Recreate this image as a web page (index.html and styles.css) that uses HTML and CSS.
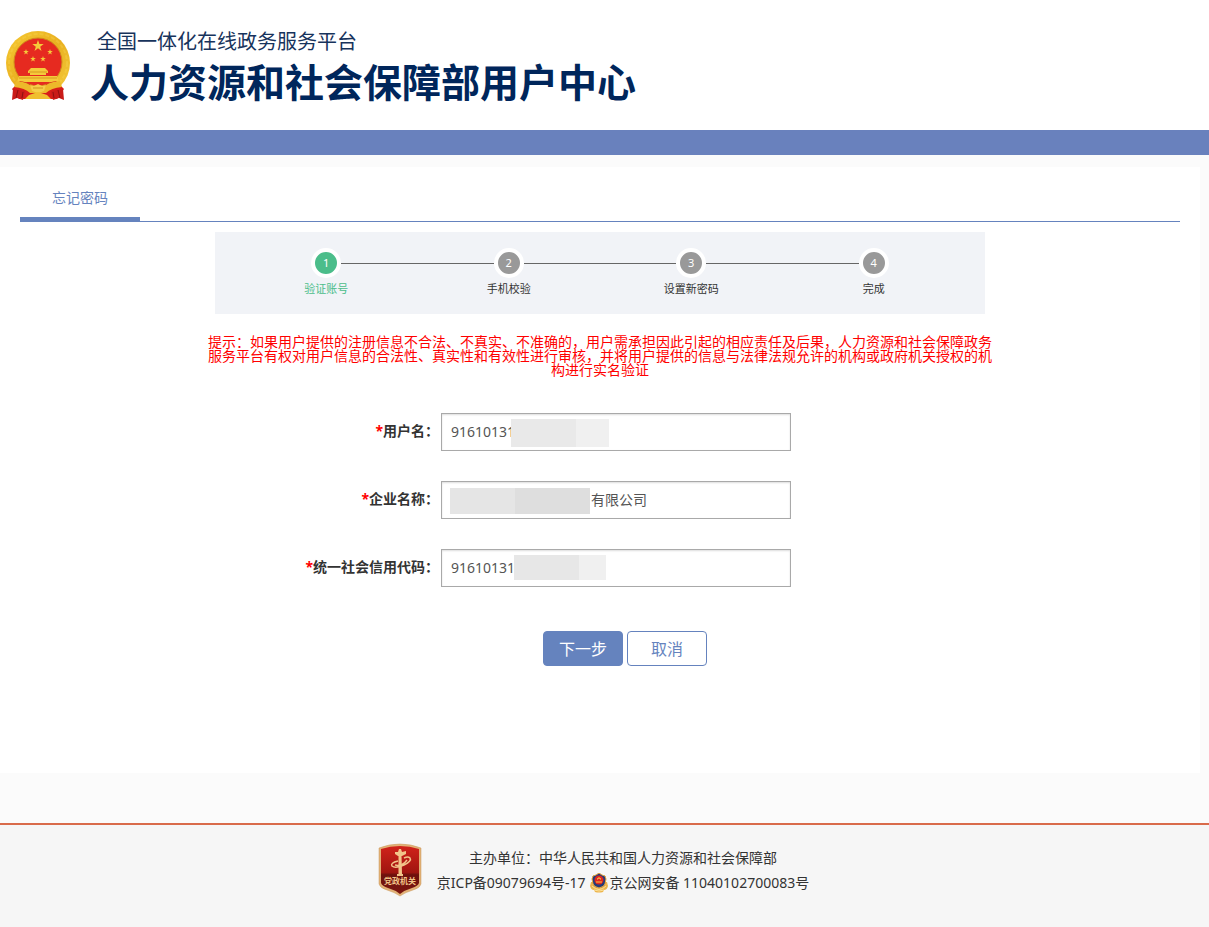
FILE: index.html
```
<!DOCTYPE html>
<html lang="zh-CN">

<head>
    <meta charset="UTF-8">
    <meta name="viewport" content="width=device-width, initial-scale=1.0">
    <title>人力资源和社会保障部用户中心</title>
    <link rel="stylesheet" href="styles.css">
</head>

<body>

    <!-- Header -->
    <header class="header">
        <svg class="emblem" viewBox="0 0 66 70" aria-hidden="true">
            <defs>
                <linearGradient id="gold" x1="0" y1="0" x2="1" y2="1">
                    <stop offset="0" stop-color="#f6c933"/>
                    <stop offset=".5" stop-color="#e9b020"/>
                    <stop offset="1" stop-color="#f5cb3c"/>
                </linearGradient>
                <path id="star" d="M0-6 1.4-1.9 5.7-1.9 2.2.7 3.5 4.9 0 2.3-3.5 4.9-2.2.7-5.7-1.9-1.4-1.9Z"/>
            </defs>
            <circle cx="33" cy="32" r="32" fill="url(#gold)"/>
            <circle cx="33" cy="32" r="29" fill="none" stroke="#f9d95a" stroke-width="2" stroke-dasharray="4 2" opacity=".3"/>
            <circle cx="33" cy="31" r="24" fill="#e62a20" stroke="#d08c1c" stroke-width="1"/>
            <g fill="#f5ca3b">
                <use href="#star" transform="translate(33 15)"/>
                <use href="#star" transform="translate(21 21) scale(.5)"/>
                <use href="#star" transform="translate(45 21) scale(.5)"/>
                <use href="#star" transform="translate(28 28) scale(.5)"/>
                <use href="#star" transform="translate(38 28) scale(.5)"/>
                <path d="M26 37h14l3 3v2H23v-2zM25 42h16v2H25zM14 45h38l2 6H12z"/>
            </g>
            <path d="M24 41h18M14 47h38" stroke="#d99720" stroke-width="1"/>
            <path d="M7 58 15 50Q25 51 29 58L37 58Q41 51 51 50L59 58 52 68H14Z" fill="#d81d19"/>
            <path d="M11 50Q24 51 28 57H38Q42 51 55 50L57 56Q46 57 41 62H25Q20 57 9 56Z" fill="#edb92a"/>
            <path d="M25 54 29 55 33 53 37 55 41 54 39 60 33 62 27 60Z" fill="#f5ce49"/>
            <path d="M28 57h10" stroke="#cf9320"/>
            <path d="M24 64 33 61 42 64 46 68H20Z" fill="#f0bf2f"/>
            <path d="M8 58 20 60 18 69 12 67 7 69ZM58 58 46 60 48 69 54 67 59 69Z" fill="#c91b18"/>
            <path d="M13 59 11 67M53 59 55 67M18 61 17 67M48 61 49 67" stroke="#8f1010"/>
        </svg>
        <div class="site-name">
            <p class="site-platform">全国一体化在线政务服务平台</p>
            <h1 class="site-title">人力资源和社会保障部用户中心</h1>
        </div>
    </header>
    <div class="nav-bar"></div>

    <!-- Main content -->
    <main class="main">
        <div class="tabs">
            <h2 class="tab">忘记密码</h2>
        </div>

        <ol class="steps">
            <li class="step active"><span class="step-num">1</span><span class="step-text">验证账号</span></li>
            <li class="step"><span class="step-num">2</span><span class="step-text">手机校验</span></li>
            <li class="step"><span class="step-num">3</span><span class="step-text">设置新密码</span></li>
            <li class="step"><span class="step-num">4</span><span class="step-text">完成</span></li>
        </ol>

        <p class="tips">提示：如果用户提供的注册信息不合法、不真实、不准确的，用户需承担因此引起的相应责任及后果，人力资源和社会保障政务服务平台有权对用户信息的合法性、真实性和有效性进行审核，并将用户提供的信息与法律法规允许的机构或政府机关授权的机构进行实名验证</p>

        <form class="form">
            <div class="form-row">
                <label for="username"><i>*</i>用户名：</label>
                <div class="field">
                    <input type="text" id="username" value="91610131">
                    <span class="mask mask-user"></span>
                </div>
            </div>
            <div class="form-row">
                <label for="company"><i>*</i>企业名称：</label>
                <div class="field">
                    <input type="text" id="company" value="　　　　　　　　　　有限公司">
                    <span class="mask mask-company"></span>
                </div>
            </div>
            <div class="form-row">
                <label for="code"><i>*</i>统一社会信用代码：</label>
                <div class="field">
                    <input type="text" id="code" value="91610131">
                    <span class="mask mask-code"></span>
                </div>
            </div>
            <div class="form-btns">
                <button type="button" class="btn btn-primary">下一步</button>
                <button type="button" class="btn">取消</button>
            </div>
        </form>
    </main>

    <!-- Footer -->
    <footer class="footer">
        <svg class="party-badge" viewBox="0 0 44 54" role="img" aria-label="党政机关">
            <defs>
                <linearGradient id="red" x1="0" y1="0" x2="0" y2="1">
                    <stop offset="0" stop-color="#d1221a"/>
                    <stop offset=".55" stop-color="#a01610"/>
                    <stop offset=".6" stop-color="#6d110d"/>
                    <stop offset="1" stop-color="#7c1610"/>
                </linearGradient>
            </defs>
            <path d="M22 1Q33 1 43 5V41Q42 45 35 47Q28 49 22 53Q16 49 9 47Q2 45 1 41V5Q11 1 22 1Z" fill="#e2b276" stroke="#c9975c" stroke-width=".5"/>
            <path d="M22 3Q32 3 41 6V40Q40 43 34 45Q27 47 22 51Q17 47 10 45Q4 43 3 40V6Q12 3 22 3Z" fill="url(#red)"/>
            <g fill="#f2c58a">
                <path d="M20.500 12H23.500L24 31H20.500ZM19 31H25V33H19Z"/>
                <path d="M21 6H23L24 9 28 8 28 11 24 13H20L17 11 17 9 20 9Z"/>
            </g>
            <path d="M20 18Q12 20 14 23Q17 26 26 22Q34 18 32 15Q30 13 26 15M17 22Q24 24 29 17" fill="none" stroke="#f2c58a" stroke-width="1.500"/>
            <text class="badge-text" x="22" y="41" text-anchor="middle">党政机关</text>
        </svg>
        <div class="footer-text">
            <p>主办单位：中华人民共和国人力资源和社会保障部</p>
            <p class="records">
                <a href="#">京ICP备09079694号-17</a>
                <a class="police" href="#">
                    <svg class="police-icon" viewBox="0 0 20 20" aria-hidden="true">
                        <path d="M2 9 1 13Q2 17 5 17L6 19Q10 20 14 19L15 17Q18 17 19 13L18 9Z" fill="#edb54d"/>
                        <path d="M10 0 13 2Q17 2 17 6L16 11Q15 14 10 15Q5 14 4 11L3 6Q3 2 7 2Z" fill="#263a79" stroke="#e7a63c"/>
                        <circle cx="10" cy="7" r="4.500" fill="#e02720"/>
                        <path d="M8 6h1v-1h2v1h1M7 9h6" fill="none" stroke="#f5ca46"/>
                        <path d="M3 13Q10 20 17 13M5 17Q10 19 15 17" fill="none" stroke="#fae09a"/>
                    </svg>京公网安备 11040102700083号</a>
            </p>
        </div>
    </footer>

</body>

</html>
```

FILE: styles.css
```
* {
    box-sizing: border-box;
    margin: 0;
    padding: 0;
}

body {
    display: flex;
    flex-direction: column;
    min-height: 100vh;
    background: #fbfbfb;
    color: #333;
    font: 14px/20px "Noto Sans", "Noto Sans CJK SC", sans-serif;
}

a {
    color: inherit;
    text-decoration: none;
}

/* header */
.header {
    display: flex;
    align-items: center;
    gap: 19px;
    height: 130px;
    padding: 2px 5px 0;
    background: #fff;
}

.emblem {
    width: 66px;
    height: 70px;
}

.site-name {
    padding-top: 3px;
}

.site-platform {
    padding-left: 7px;
    color: #17335c;
    font-size: 20px;
    line-height: 28px;
}

.site-title {
    color: #00265b;
    font-size: 39px;
    line-height: 52px;
}

.nav-bar {
    height: 25px;
    background: #6981bd;
}

/* main */
.main {
    width: 100%;
    max-width: 1200px;
    margin: 12px 0 50px;
    padding: 15px 20px 107px;
    background: #fff;
}

.tabs {
    display: flex;
    border-bottom: 1px solid #6583be;
}

.tab {
    width: 120px;
    height: 40px;
    margin-bottom: -1px;
    border-bottom: 5px solid #6583be;
    color: #6583be;
    font-size: 14px;
    font-weight: normal;
    line-height: 32px;
    text-align: center;
}

/* step progress */
.steps {
    display: flex;
    max-width: 770px;
    margin: 10px auto 21px;
    padding: 16px 20px 14px;
    background: #f1f3f7;
    list-style: none;
}

.step {
    display: grid;
    flex: 1;
    grid-template-columns: 1fr 30px 1fr;
    align-items: center;
    font-size: 11px;
}

.step::before,
.step::after {
    content: "";
    height: 1px;
    background: #666;
}

.step:first-child::before,
.step:last-child::after {
    background: none;
}

.step-num {
    height: 30px;
    border: 4px solid #fff;
    border-radius: 50%;
    background: #999;
    color: #fff;
    line-height: 22px;
    text-align: center;
}

.step-text {
    grid-row: 2;
    grid-column: 1 / 4;
    line-height: 22px;
    text-align: center;
}

.active .step-num {
    background: #4bbd8a;
}

.active .step-text {
    color: #4bbd8a;
}

.tips {
    max-width: 790px;
    margin: 0 auto 36px;
    color: #f00;
    line-height: 14px;
    text-align: center;
}

/* form */
.form {
    max-width: 770px;
    margin: 0 auto;
}

.form-row {
    display: flex;
    align-items: center;
    gap: 2px;
    margin-bottom: 30px;
}

.form-row label {
    width: 224px;
    padding-bottom: 2px;
    font-weight: bold;
    text-align: right;
}

.form-row label i {
    color: #f00;
    font-style: normal;
}

.field {
    position: relative;
    width: 350px;
}

.field input {
    display: block;
    width: 100%;
    height: 38px;
    padding: 0 9px 2px;
    border: 1px solid #a9a9a9;
    box-shadow: inset 0 1px 2px #ddd;
    color: #555;
    font: 14px "Noto Sans", "Noto Sans CJK SC", sans-serif;
}

/* grey blocks that hide private data */
.mask {
    position: absolute;
    pointer-events: none;
}

.mask-user {
    top: 6px;
    left: 70px;
    width: 98px;
    height: 28px;
    background: linear-gradient(90deg, #e9e9e9 65px, #f0f0f0 65px);
}

.mask-company {
    top: 7px;
    left: 9px;
    width: 140px;
    height: 26px;
    background: linear-gradient(90deg, #e5e5e5 65px, #dedede 65px);
}

.mask-code {
    top: 6px;
    left: 73px;
    width: 92px;
    height: 25px;
    background: linear-gradient(90deg, #e7e7e7 65px, #f0f0f0 65px);
}

.form-btns {
    display: flex;
    gap: 4px;
    padding: 14px 0 0 328px;
}

.btn {
    width: 80px;
    height: 35px;
    padding-bottom: 2px;
    border: 1px solid #6583be;
    border-radius: 4px;
    background: #fff;
    color: #6583be;
    font: 16px "Noto Sans CJK SC", sans-serif;
    cursor: pointer;
}

.btn-primary {
    background: #6583be;
    color: #fff;
}

/* footer */
.footer {
    display: flex;
    flex: 1;
    align-items: flex-start;
    justify-content: center;
    gap: 15px;
    padding: 18px 22px 30px 0;
    border-top: 2px solid #d96b4b;
    background: #f6f6f6;
}

.party-badge {
    width: 44px;
    height: 54px;
}

.badge-text {
    fill: #f2c58a;
    font-size: 8px;
    font-weight: bold;
}

.footer-text {
    padding-top: 2px;
    line-height: 25px;
    text-align: center;
}

.records {
    display: flex;
    gap: 4px;
}

.police {
    display: flex;
    align-items: center;
}

.police-icon {
    width: 20px;
    height: 20px;
}
```
